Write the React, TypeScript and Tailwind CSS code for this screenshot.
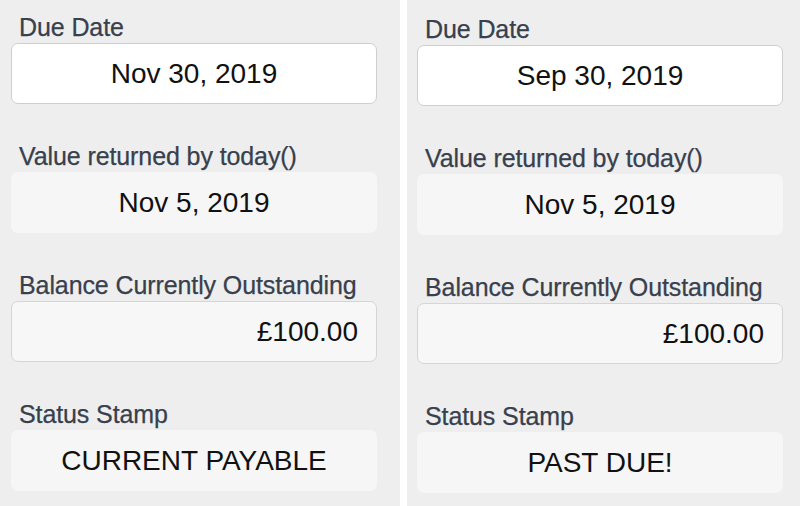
type Field = {
  label: string;
  value: string;
  tone: "white" | "outlined" | "plain";
  align?: "center" | "right";
};

const boxTone = {
  white: "bg-white border border-[#cfcfcf]",
  outlined: "bg-[#f7f7f7] border border-[#d5d5d5]",
  plain: "bg-[#f6f6f6]",
};

const FieldBlock = ({ field }: { field: Field }) => (
  <div className="flex flex-col gap-1">
    <div className="pl-2 text-[25px] leading-6 tracking-[-0.1px] text-[#38404d] [-webkit-text-stroke:0.25px_#38404d]">
      {field.label}
    </div>
    <div
      className={`flex h-[61px] w-[366px] items-center rounded-[7px] text-[28px] leading-none text-[#111111] ${
        boxTone[field.tone]
      } ${field.align === "right" ? "justify-end pr-[18px]" : "justify-center"}`}
    >
      {field.value}
    </div>
  </div>
);

const Panel = ({ fields, className }: { fields: Field[]; className: string }) => (
  <div className={`flex flex-col gap-10 ${className}`}>
    {fields.map((f) => (
      <FieldBlock key={f.label} field={f} />
    ))}
  </div>
);

const makeFields = (due: string, stamp: string): Field[] => [
  { label: "Due Date", value: due, tone: "white" },
  { label: "Value returned by today()", value: "Nov 5, 2019", tone: "plain" },
  { label: "Balance Currently Outstanding", value: "£100.00", tone: "outlined", align: "right" },
  { label: "Status Stamp", value: stamp, tone: "plain" },
];

export default function App() {
  return (
    <div className="flex h-[506px] w-[800px] overflow-hidden bg-[#eeeeee] font-['Liberation_Sans',Arial,sans-serif]">
      <Panel
        className="w-[400px] shrink-0 pl-[11px] pt-[15px]"
        fields={makeFields("Nov 30, 2019", "CURRENT PAYABLE")}
      />
      <div className="w-[7px] shrink-0 bg-white" />
      <Panel
        className="flex-1 pl-[10px] pt-[17px]"
        fields={makeFields("Sep 30, 2019", "PAST DUE!")}
      />
    </div>
  );
}
